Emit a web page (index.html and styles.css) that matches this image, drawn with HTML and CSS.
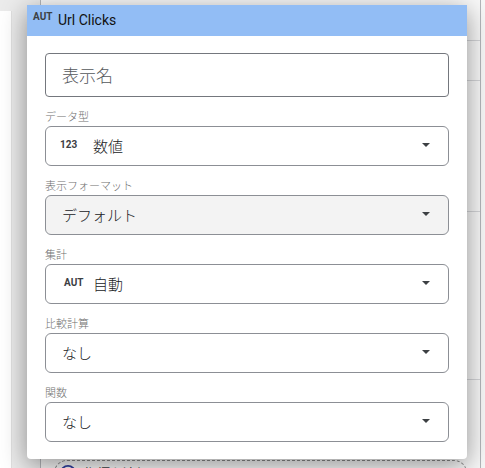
FILE: index.html
```
<!DOCTYPE html>
<html lang="ja">
<head>
    <meta charset="UTF-8">
    <meta name="viewport" content="width=device-width, initial-scale=1.0">
    <title>Url Clicks</title>
    <link rel="stylesheet" href="styles.css">
</head>
<body>
    <div class="workspace">
        <div class="canvas"></div>
        <div class="panel">
            <div class="section section-first"></div>
            <div class="section section-small"></div>
            <div class="section section-large"></div>
            <div class="section section-wide"></div>
            <div class="section-metrics">
                <button class="add-metric" type="button">
                    <svg class="add-icon" viewBox="0 0 18 18">
                        <circle cx="9" cy="9" r="8" />
                        <path d="M9 5v8M5 9h8" />
                    </svg>
                    指標を追加
                </button>
            </div>
        </div>
    </div>

    <div class="dialog" role="dialog" aria-labelledby="dialogTitle">
        <div class="dialog-header">
            <span class="type-icon">AUT</span>
            <span class="dialog-title" id="dialogTitle">Url Clicks</span>
        </div>
        <form class="dialog-body">
            <input class="name-input" type="text" placeholder="表示名" aria-label="表示名">

            <label class="field-label" for="dataType">データ型</label>
            <div class="select-box">
                <span class="type-icon type-number">123</span>
                <select id="dataType"><option>数値</option></select>
                <svg class="arrow" viewBox="0 0 8 4"><path d="M0 0h8L4 4z" /></svg>
            </div>

            <label class="field-label" for="format">表示フォーマット</label>
            <div class="select-box select-filled">
                <select id="format"><option>デフォルト</option></select>
                <svg class="arrow" viewBox="0 0 8 4"><path d="M0 0h8L4 4z" /></svg>
            </div>

            <label class="field-label" for="aggregation">集計</label>
            <div class="select-box">
                <span class="type-icon type-auto">AUT</span>
                <select id="aggregation"><option>自動</option></select>
                <svg class="arrow" viewBox="0 0 8 4"><path d="M0 0h8L4 4z" /></svg>
            </div>

            <label class="field-label" for="comparison">比較計算</label>
            <div class="select-box">
                <select id="comparison"><option>なし</option></select>
                <svg class="arrow" viewBox="0 0 8 4"><path d="M0 0h8L4 4z" /></svg>
            </div>

            <label class="field-label" for="func">関数</label>
            <div class="select-box">
                <select id="func"><option>なし</option></select>
                <svg class="arrow" viewBox="0 0 8 4"><path d="M0 0h8L4 4z" /></svg>
            </div>
        </form>
    </div>
</body>
</html>
```
FILE: styles.css
```
* {
    box-sizing: border-box;
}

body {
    margin: 0;
    height: 100vh;
    overflow: hidden;
    position: relative;
    background: #f8f8f8;
    font-family: Roboto, "Noto Sans CJK JP", sans-serif;
    color: #3c4043;
}

/* page behind the dialog */
.workspace {
    display: flex;
    height: 100%;
    padding-right: 4px;
    background: #f8f8f8;
}

.canvas {
    width: 40px;
    background: #ebebeb;
    padding-top: 11px;
}

.canvas::before {
    content: "";
    display: block;
    width: 11px;
    height: 100%;
    background: #fff;
    border-right: 1px solid #e0e0e0;
}

.panel {
    flex: 1;
    border-left: 1px solid #b4b6ba;
    border-right: 1px solid #b4b6ba;
    background: #f8f8f8;
}

.section {
    border-bottom: 1px solid #d4d5d8;
}

.section-first {
    height: 41px;
}

.section-small {
    height: 40px;
}

.section-large {
    height: 131px;
}

.section-wide {
    height: 168px;
}

.section-metrics {
    padding: 80px 13px 0;
}

.add-metric {
    display: flex;
    align-items: center;
    gap: 8px;
    width: 100%;
    height: 26px;
    padding: 0 5px;
    border: 1px dashed #8a8a8a;
    border-radius: 13px;
    background: none;
    font: 13px/18px "Noto Sans CJK JP", sans-serif;
    color: #3c4043;
}

.add-icon {
    width: 16px;
    height: 16px;
    fill: none;
    stroke: #303f9f;
    stroke-width: 2;
}

/* dialog */
.dialog {
    position: absolute;
    top: 5px;
    left: 27px;
    right: 18px;
    background: #fff;
    border-radius: 0 0 4px 4px;
    box-shadow: 0 6px 26px rgba(0, 0, 0, 0.42);
}

.dialog-header {
    display: flex;
    height: 31px;
    padding: 0 6px;
    background: #92bdf5;
}

.dialog-title {
    font-size: 14px;
    line-height: 31px;
    color: #111;
}

.type-icon {
    width: 25px;
    font: 700 10px/24px "Liberation Sans Narrow", Roboto, sans-serif;
    color: #3c4043;
}

.dialog-body {
    padding: 17px 18px;
}

.name-input {
    display: block;
    width: 100%;
    height: 44px;
    padding: 0 16px 2px;
    border: 1px solid #74777d;
    border-radius: 4px;
    font: 300 17px "Noto Sans CJK JP", sans-serif;
    color: #3c4043;
}

.name-input::placeholder {
    color: #55585c;
    opacity: 1;
}

.field-label {
    display: block;
    height: 29px;
    padding-top: 11px;
    font: 300 11px/16px "Noto Sans CJK JP", sans-serif;
    color: #707070;
}

.select-box {
    display: flex;
    align-items: center;
    height: 40px;
    padding: 0 18px 2px 16px;
    border: 1px solid #8c8f95;
    border-radius: 6px;
}

.select-filled {
    background: #f3f3f3;
}

.select-box .type-number {
    width: 33px;
    margin-left: -2px;
}

.select-box .type-auto {
    width: 31px;
    padding-left: 2px;
}

select {
    flex: 1;
    height: 100%;
    padding: 0;
    border: none;
    background: none;
    appearance: none;
    font: 300 15px "Noto Sans CJK JP", sans-serif;
    color: #202124;
}

.arrow {
    width: 8px;
    height: 4px;
    fill: #3c4043;
    pointer-events: none;
}
```
